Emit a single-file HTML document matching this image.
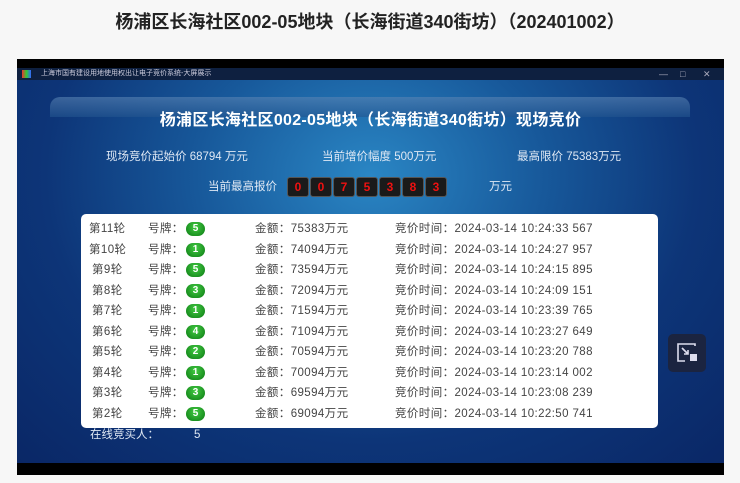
<!DOCTYPE html><html><head><meta charset="utf-8"><style>
*{margin:0;padding:0;box-sizing:border-box}
body{width:740px;height:483px;background:#f7f7f7;font-family:"Liberation Sans","Noto Sans CJK SC",sans-serif;position:relative;overflow:hidden}
.h{position:absolute;top:0;left:0;width:740px;height:57px;background:#f7f7f7;text-align:center;font-size:18px;font-weight:bold;line-height:44px;color:#222}
.scr{position:absolute;left:17px;top:59px;width:707px;height:416px;background:#000}
.tb{position:absolute;left:0;top:9px;width:707px;height:12px;background:#0e2040;color:#ccd;font-size:7px;line-height:12px;padding-left:24px}
.tb i{position:absolute;left:5px;top:2px;width:9px;height:8px;background:linear-gradient(90deg,#e33,#3c3,#36f)}
.tb b{position:absolute;top:0;font-weight:normal;font-size:9px;color:#aab}
.main{position:absolute;left:0;top:21px;width:707px;height:383px;background:radial-gradient(ellipse at 50% 25%,#2a86c4 0%,#17589a 35%,#0d3578 65%,#0a2766 100%)}
.band{position:absolute;left:33px;top:17px;width:640px;height:20px;border-radius:10px 10px 0 0;background:linear-gradient(#5a84b4,#23558f);opacity:.6}
.t{position:absolute;left:0;width:707px;text-align:center;color:#fff;font-weight:bold;font-size:16px;letter-spacing:.3px;line-height:20px}
.inf{position:absolute;color:#dfe8f4;font-size:11.5px;line-height:14px}
.dg{position:absolute;top:97px;width:22px;height:20px;background:#1a1a1a;border:1px solid #555;border-radius:3px;color:#e11;font-weight:bold;font-size:12px;text-align:center;line-height:18px}
.tbl{position:absolute;left:64px;top:134px;width:577px;height:214px;background:#fff;border-radius:5px}
.r{position:absolute;left:0;height:20px;width:577px;font-size:11.5px;color:#444;line-height:20px;letter-spacing:.4px}
.r span{position:absolute;white-space:nowrap}
.c{display:inline-block;width:19px;height:14px;border-radius:8px;background:radial-gradient(circle at 50% 35%,#4c4,#0a7a12);color:#fff;font-weight:bold;text-align:center;line-height:14px;font-size:10px;top:3px;letter-spacing:0}
.bt{position:absolute;left:651px;top:254px;width:38px;height:38px;background:#1b2440;border-radius:5px}
</style></head><body>
<div class="h">杨浦区长海社区002-05地块（长海街道340街坊）（202401002）</div>
<div class="scr">
<div class="tb"><i></i>上海市国有建设用地使用权出让电子竞价系统-大屏展示<b style="left:642px">—</b><b style="left:663px">□</b><b style="left:686px">✕</b></div>
<div class="main">
<div class="band"></div>
<div class="t" style="top:31px">杨浦区长海社区002-05地块（长海街道340街坊）现场竞价</div>
<div class="inf" style="left:89px;top:70px">现场竞价起始价 68794 万元</div>
<div class="inf" style="left:305px;top:70px">当前增价幅度 500万元</div>
<div class="inf" style="left:500px;top:70px">最高限价 75383万元</div>
<div class="inf" style="left:191px;top:100px">当前最高报价</div>
<div class="dg" style="left:270px">0</div><div class="dg" style="left:293px">0</div><div class="dg" style="left:316px">7</div><div class="dg" style="left:339px">5</div><div class="dg" style="left:362px">3</div><div class="dg" style="left:385px">8</div><div class="dg" style="left:408px">3</div>
<div class="inf" style="left:472px;top:100px">万元</div>
<div class="tbl">
<div class="r" style="top:5px"><span style="left:8px">第11轮</span><span style="left:67px">号牌：</span><span class="c" style="left:105px">5</span><span style="left:174px">金额：75383万元</span><span style="left:314px">竞价时间：2024-03-14 10:24:33 567</span></div>
<div class="r" style="top:26px"><span style="left:8px">第10轮</span><span style="left:67px">号牌：</span><span class="c" style="left:105px">1</span><span style="left:174px">金额：74094万元</span><span style="left:314px">竞价时间：2024-03-14 10:24:27 957</span></div>
<div class="r" style="top:46px"><span style="left:11px">第9轮</span><span style="left:67px">号牌：</span><span class="c" style="left:105px">5</span><span style="left:174px">金额：73594万元</span><span style="left:314px">竞价时间：2024-03-14 10:24:15 895</span></div>
<div class="r" style="top:67px"><span style="left:11px">第8轮</span><span style="left:67px">号牌：</span><span class="c" style="left:105px">3</span><span style="left:174px">金额：72094万元</span><span style="left:314px">竞价时间：2024-03-14 10:24:09 151</span></div>
<div class="r" style="top:87px"><span style="left:11px">第7轮</span><span style="left:67px">号牌：</span><span class="c" style="left:105px">1</span><span style="left:174px">金额：71594万元</span><span style="left:314px">竞价时间：2024-03-14 10:23:39 765</span></div>
<div class="r" style="top:108px"><span style="left:11px">第6轮</span><span style="left:67px">号牌：</span><span class="c" style="left:105px">4</span><span style="left:174px">金额：71094万元</span><span style="left:314px">竞价时间：2024-03-14 10:23:27 649</span></div>
<div class="r" style="top:128px"><span style="left:11px">第5轮</span><span style="left:67px">号牌：</span><span class="c" style="left:105px">2</span><span style="left:174px">金额：70594万元</span><span style="left:314px">竞价时间：2024-03-14 10:23:20 788</span></div>
<div class="r" style="top:149px"><span style="left:11px">第4轮</span><span style="left:67px">号牌：</span><span class="c" style="left:105px">1</span><span style="left:174px">金额：70094万元</span><span style="left:314px">竞价时间：2024-03-14 10:23:14 002</span></div>
<div class="r" style="top:169px"><span style="left:11px">第3轮</span><span style="left:67px">号牌：</span><span class="c" style="left:105px">3</span><span style="left:174px">金额：69594万元</span><span style="left:314px">竞价时间：2024-03-14 10:23:08 239</span></div>
<div class="r" style="top:190px"><span style="left:11px">第2轮</span><span style="left:67px">号牌：</span><span class="c" style="left:105px">5</span><span style="left:174px">金额：69094万元</span><span style="left:314px">竞价时间：2024-03-14 10:22:50 741</span></div>
</div>
<div class="inf" style="left:73px;top:348px">在线竞买人：</div>
<div class="inf" style="left:177px;top:348px">5</div>
<div class="bt"><svg width="38" height="38" viewBox="0 0 38 38" fill="none" stroke="#dde" stroke-width="1.6"><path d="M27 12V10H10v17h7"/><path d="M14 14l6 6M20 16v4h-4"/><rect x="22" y="20" width="7" height="7" fill="#dde" stroke="none"/></svg></div>
</div>
</div>
</body></html>
